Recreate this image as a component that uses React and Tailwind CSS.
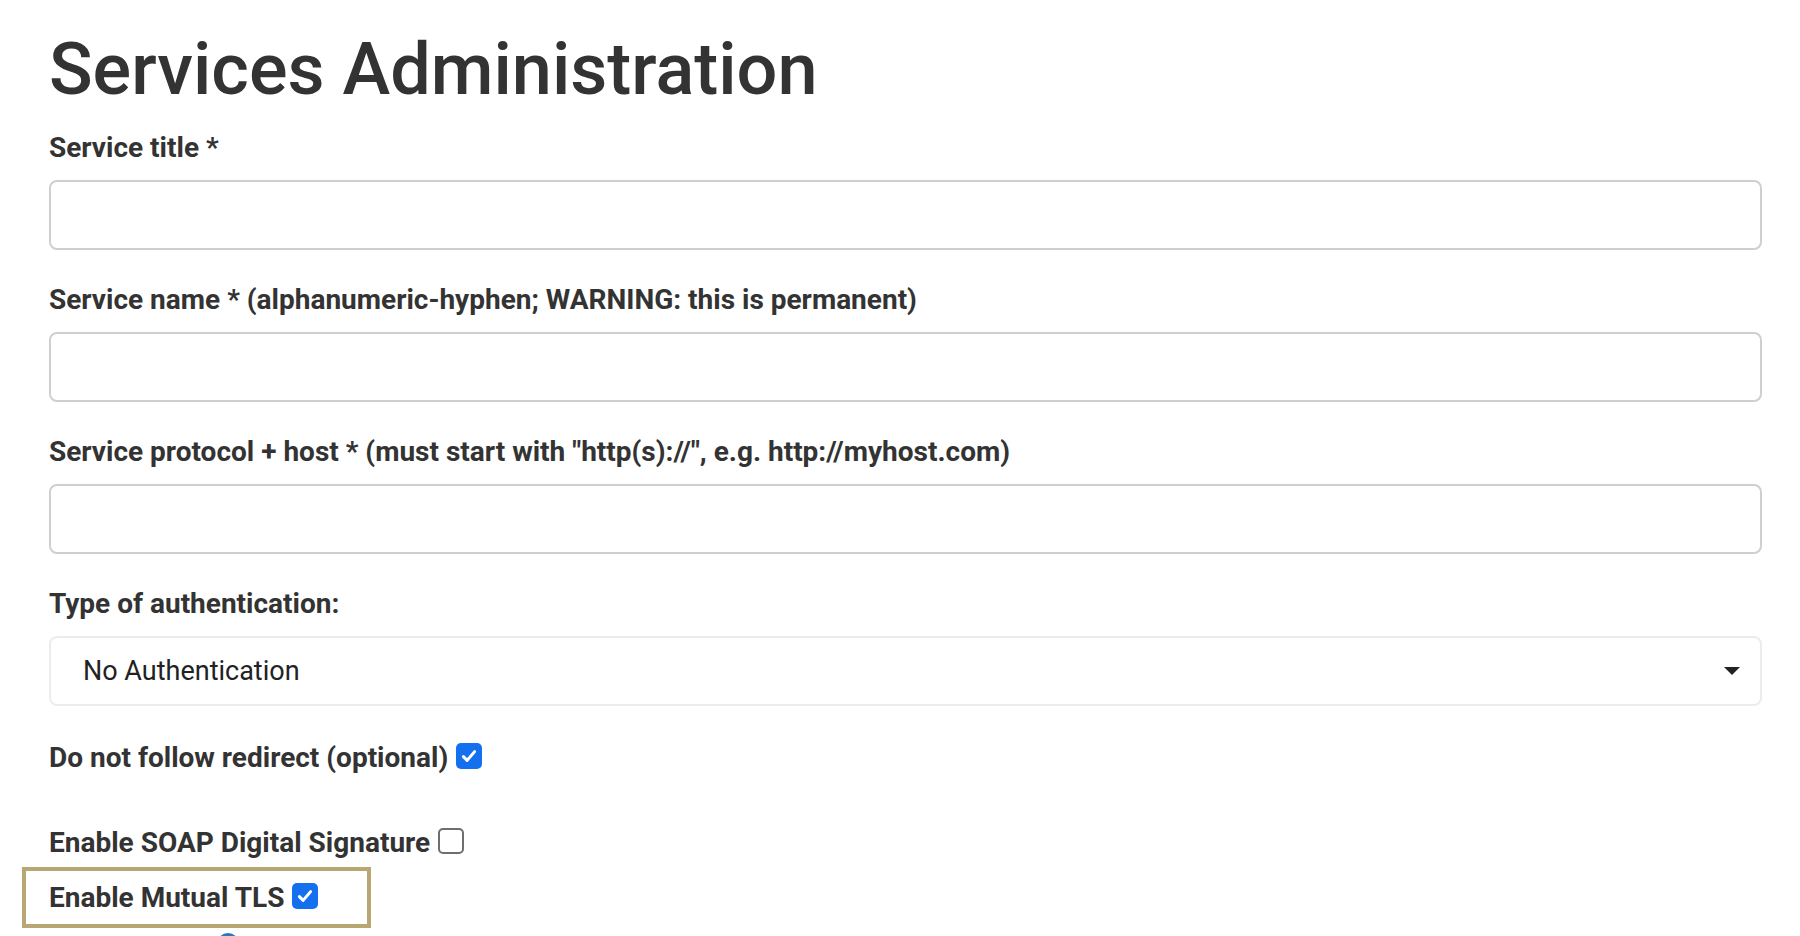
import { useState } from "react";

function Check({ checked, onChange }) {
  return (
    <button
      type="button"
      onClick={onChange}
      className={
        "inline-flex items-center justify-center w-[26px] h-[26px] rounded-[5px] mb-[4px] " +
        (checked ? "bg-[#1570ef]" : "bg-white border-2 border-[#6e6e6e]")
      }
    >
      {checked && (
        <svg viewBox="0 0 16 16" className="w-[20px] h-[20px]">
          <path
            d="M3.5 8.5l3 3 6-7"
            fill="none"
            stroke="white"
            strokeWidth="2.4"
            strokeLinecap="round"
            strokeLinejoin="round"
          />
        </svg>
      )}
    </button>
  );
}

function Field({ label }) {
  return (
    <div className="mb-[30px]">
      <label className="block text-[28px] font-bold leading-[40px] text-[#333] mb-[12px]">
        {label}
      </label>
      <input
        type="text"
        className="block w-full h-[70px] rounded-[8px] border-2 border-[#cfcfcf] bg-white px-4 text-[27px] outline-none"
      />
    </div>
  );
}

export default function App() {
  const [redirect, setRedirect] = useState(true);
  const [soap, setSoap] = useState(false);
  const [mtls, setMtls] = useState(true);

  return (
    <div className="h-screen bg-white overflow-hidden font-['Roboto',_'Liberation_Sans',_sans-serif] text-[#333]">
      <div className="pl-[49px] pr-[38px] pt-[27px]">
        <h1 className="text-[72px] font-medium leading-[86px] text-[#333] mb-[15px]">
          Services Administration
        </h1>

        <Field label="Service title *" />
        <Field label="Service name * (alphanumeric-hyphen; WARNING: this is permanent)" />
        <Field label={'Service protocol + host * (must start with "http(s)://", e.g. http://myhost.com)'} />

        <div>
          <label className="block text-[28px] font-bold leading-[40px] text-[#333] mb-[12px]">
            Type of authentication:
          </label>
          <div className="relative h-[70px] rounded-[8px] border-2 border-[#ececec] bg-white flex items-center pl-[32px]">
            <span className="text-[27px] text-[#222]">No Authentication</span>
            <svg viewBox="0 0 16 8" className="absolute right-[20px] top-[29px] w-[16px] h-[8px]">
              <path d="M0 0h16L8 8z" fill="#222" />
            </svg>
          </div>
        </div>

        <div className="mt-[32px] flex items-center gap-[8px] h-[40px]">
          <span className="text-[28px] font-bold text-[#333]">Do not follow redirect (optional)</span>
          <Check checked={redirect} onChange={() => setRedirect(!redirect)} />
        </div>

        <div className="mt-[45px] flex items-center gap-[8px] h-[40px]">
          <span className="text-[28px] font-bold text-[#333]">Enable SOAP Digital Signature</span>
          <Check checked={soap} onChange={() => setSoap(!soap)} />
        </div>

        <div className="-ml-[27px] mt-[4px] w-[349px] h-[61px] border-4 border-[#b9a773] flex items-center pl-[23px] gap-[8px]">
          <span className="text-[28px] font-bold text-[#333]">Enable Mutual TLS</span>
          <Check checked={mtls} onChange={() => setMtls(!mtls)} />
        </div>

        <div className="ml-[168px] mt-[5px] w-[22px] h-[22px] rounded-full bg-[#2b78b5]" />
      </div>
    </div>
  );
}
